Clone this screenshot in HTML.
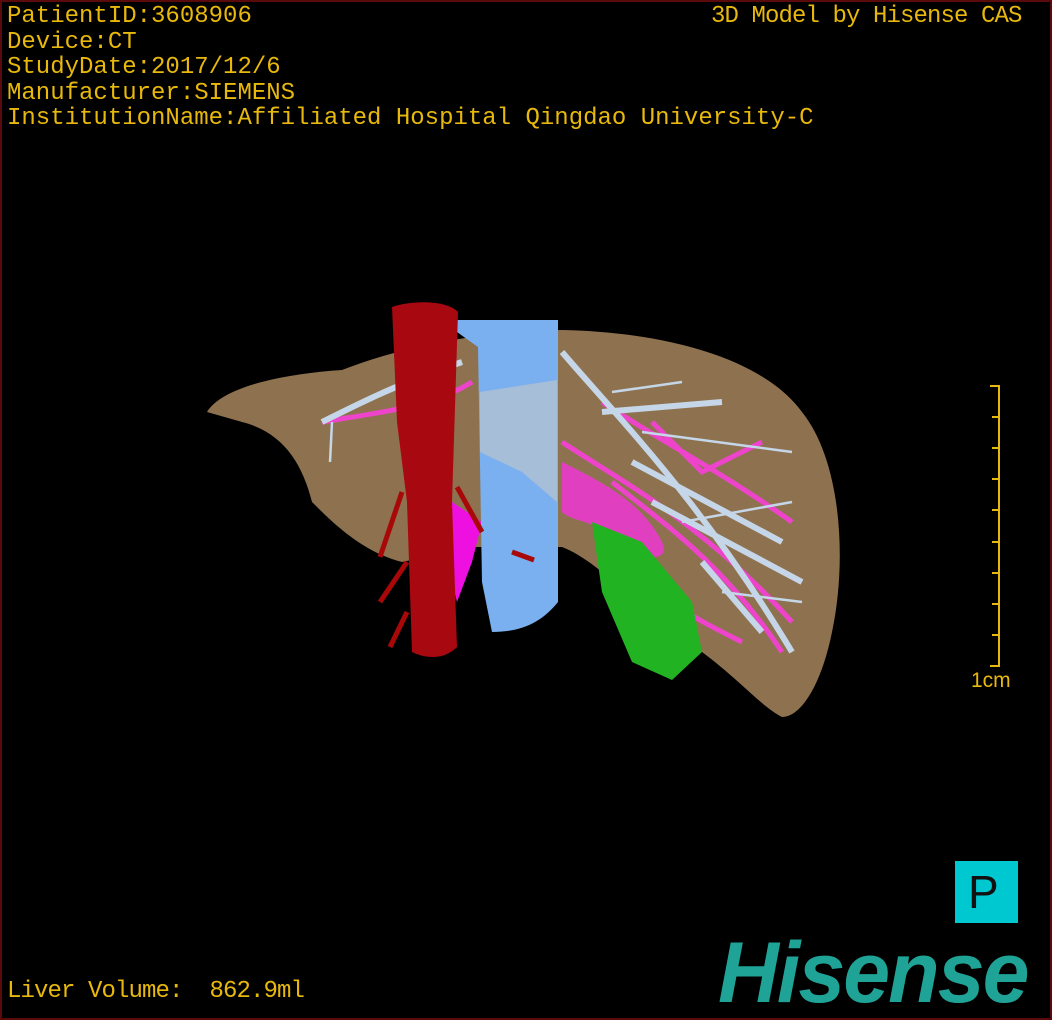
<!DOCTYPE html>
<html><head><meta charset="utf-8"><style>
html,body{margin:0;padding:0;background:#000;}
#c{position:relative;width:1048px;height:1016px;border:2px solid #5a0a0a;background:#000;overflow:hidden;font-family:"Liberation Sans","Noto Sans CJK SC",sans-serif;}
.t{position:absolute;left:5px;color:#e8b80c;font-family:"Liberation Mono",monospace;font-size:24px;line-height:25.5px;white-space:pre;}
</style></head><body><div id="c">
<div class="t" style="top:2px">PatientID:3608906
Device:CT
StudyDate:2017/12/6
Manufacturer:SIEMENS
InstitutionName:Affiliated Hospital Qingdao University-C</div>
<div class="t" style="top:2px;left:709px;letter-spacing:-0.9px">3D Model by Hisense CAS</div>
<div class="t" style="top:977px;letter-spacing:-0.9px">Liver Volume:  862.9ml</div>
<div class="t" style="top:666px;left:969px;font-family:'Liberation Sans',sans-serif;font-size:21px">1cm</div>
<svg width="1048" height="1016" style="position:absolute;left:0;top:0">
<g stroke="#e8b80c" stroke-width="2">
<line x1="997" y1="383" x2="997" y2="665"/>
<line x1="988" y1="384" x2="998" y2="384"/><line x1="990" y1="415" x2="998" y2="415"/><line x1="990" y1="446" x2="998" y2="446"/><line x1="990" y1="477" x2="998" y2="477"/><line x1="990" y1="508" x2="998" y2="508"/><line x1="990" y1="540" x2="998" y2="540"/><line x1="990" y1="571" x2="998" y2="571"/><line x1="990" y1="602" x2="998" y2="602"/><line x1="990" y1="633" x2="998" y2="633"/><line x1="988" y1="664" x2="998" y2="664"/>
</g>
<path d="M205 410 C220 385 280 372 340 368 C400 345 470 330 560 328 C660 330 760 355 800 410 C840 460 845 560 830 630 C820 680 800 715 780 715 C760 705 740 680 700 650 C650 620 600 560 560 545 L470 545 L400 560 C360 550 330 520 310 500 C300 460 280 430 240 420 Z" fill="#8e724f"/>
<g stroke="#ee44cc" stroke-width="5" fill="none">
<path d="M320 420 C380 410 430 405 470 380"/><path d="M560 440 C620 480 700 520 790 620"/>
<path d="M600 400 C660 440 720 470 790 520"/><path d="M610 480 C660 520 720 560 780 650"/>
<path d="M650 420 L700 470 L760 440"/><path d="M620 560 C660 600 700 620 740 640"/>
</g>
<path d="M560 460 C600 480 640 500 660 540 C670 560 640 560 620 540 C600 520 570 520 560 510 Z" fill="#e040c0"/>
<path d="M450 500 L480 520 L470 560 L455 600 L445 560 Z" fill="#ee10e0"/>
<path d="M590 520 L640 540 L690 600 L700 650 L670 678 L630 660 L600 590 Z" fill="#22b322"/>
<g stroke="#c5d6e8" stroke-width="6" fill="none">
<path d="M560 350 C620 420 700 500 790 650"/><path d="M320 420 C360 400 400 380 460 360"/>
<path d="M600 410 L720 400"/><path d="M630 460 L780 540"/><path d="M650 500 L800 580"/><path d="M700 560 L760 630"/>
</g>
<g stroke="#c5d6e8" stroke-width="2.5" fill="none">
<path d="M610 390 L680 380"/><path d="M640 430 L790 450"/><path d="M680 520 L790 500"/><path d="M720 590 L800 600"/><path d="M330 420 L328 460"/>
</g>
<path d="M455 318 L556 318 L556 600 C540 620 520 630 490 630 L480 580 L476 345 L455 330 Z" fill="#7ab0f0"/>
<path d="M478 390 L555 378 L555 500 L520 470 L478 450 Z" fill="#a6bed8"/>
<g stroke="#a80808" stroke-width="5" fill="none"><path d="M400 490 L378 555"/><path d="M405 560 L378 600"/><path d="M405 610 L388 645"/><path d="M455 485 L480 530"/><path d="M510 550 L532 558"/></g>
<path d="M390 305 C410 298 445 298 456 310 L450 500 L455 645 C440 660 420 655 410 650 L405 500 L395 420 Z" fill="#a80810"/>
<rect x="953" y="859" width="63" height="62" fill="#00c8d0"/>
</svg>
<div style="position:absolute;left:966px;top:860px;font-size:46px;color:#111;font-family:'Liberation Sans',sans-serif;line-height:60px">P</div>
<div style="position:absolute;left:716px;top:926px;font-size:86px;font-weight:bold;font-style:italic;color:#1fa396;font-family:'Liberation Sans',sans-serif;letter-spacing:-2px;line-height:90px;transform:scaleX(0.98);transform-origin:left">Hisense</div>
</div></body></html>
